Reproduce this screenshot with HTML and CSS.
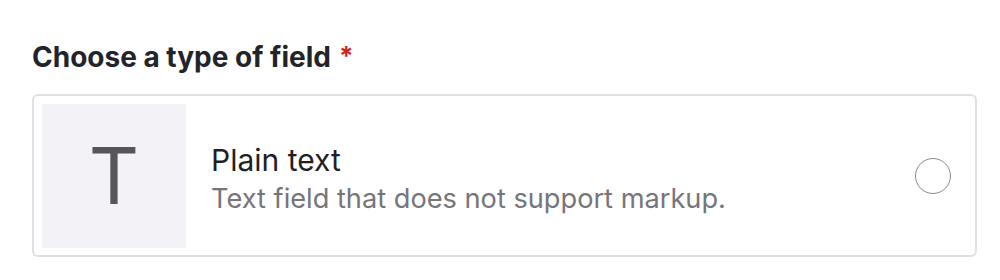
FILE: index.html
```html
<!DOCTYPE html>
<html lang="en">
<head>
<meta charset="utf-8">
<link rel="stylesheet" href="styles.css">
</head>
<body>
<div class="page">
  <div class="label">Choose a type of field<span class="req">*</span></div>
  <label class="card">
    <div class="icon">T</div>
    <div class="info">
      <div class="title">Plain text</div>
      <div class="desc">Text field that does not support markup.</div>
    </div>
    <span class="radio"></span>
  </label>
</div>
</body>
</html>
```
FILE: styles.css
```css
html, body {
  margin: 0;
  padding: 0;
  background: #ffffff;
}
body {
  font-family: Inter, "Noto Sans", sans-serif;
  color: #1f1f24;
}
.page {
  padding: 40px 23px 0 32px;
}
.label {
  font-size: 28px;
  font-weight: 700;
  line-height: 34px;
  height: 34px;
  color: #232429;
}
.req {
  color: #d42222;
  font-size: 26px;
  line-height: 1;
  margin-left: 8px;
  vertical-align: 2px;
}
.card {
  margin-top: 20px;
  display: flex;
  align-items: center;
  border: 2px solid #e0e0e4;
  border-radius: 6px;
  padding: 8px 24px 8px 8px;
  height: 163px;
  box-sizing: border-box;
}
.icon {
  width: 144px;
  height: 144px;
  background: #f2f2f7;
  display: flex;
  align-items: center;
  justify-content: center;
  font-size: 78px;
  font-weight: 400;
  color: #55565b;
  flex: none;
}
.info {
  flex: 1;
  margin-left: 25px;
  margin-top: 6px;
}
.title {
  font-size: 30px;
  line-height: 36px;
  color: #1f1f24;
}
.desc {
  margin-top: 5px;
  font-size: 27.2px;
  line-height: 32px;
  color: #75757b;
}
.radio {
  width: 34px;
  height: 34px;
  border: 1.5px solid #8a8a8f;
  border-radius: 50%;
  flex: none;
}
```
